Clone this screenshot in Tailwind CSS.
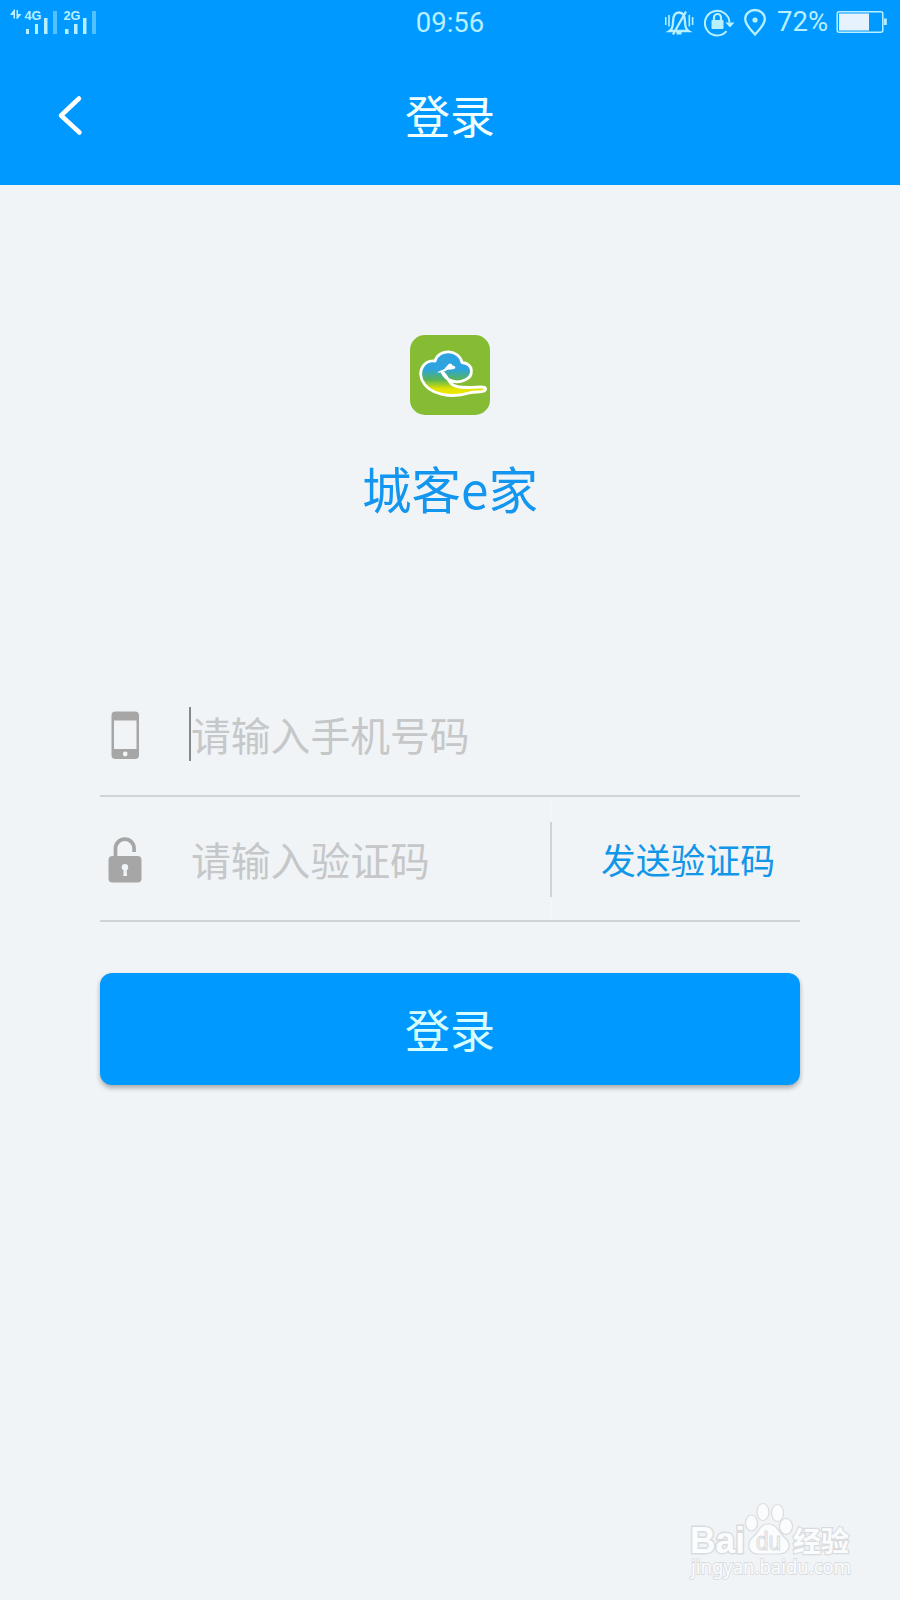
<!DOCTYPE html>
<html lang="zh-CN">
<head>
  <meta charset="UTF-8" />
  <meta name="viewport" content="width=device-width, initial-scale=1.0" />
  <title>登录</title>
  <script src="https://cdn.jsdelivr.net/npm/@tailwindcss/browser@4"></script>
</head>
<body class="bg-[#f0f4f7] h-[1600px] overflow-hidden relative font-['Roboto','Noto_Sans_CJK_SC',sans-serif]">
  <header class="h-[185px] bg-[#0099ff] flex flex-col">
    <!-- status bar -->
    <div class="h-[46px] grid grid-cols-3 items-center text-[#b9f0ff]">
      <svg class="w-[110px] h-[46px]" viewBox="0 0 110 46" fill="currentColor">
        <path d="M10 15l4-5.500h1v9h-1.500v-3.500zM21.500 14l-4 5h-1v-9h1.500v4z" />
        <text x="24.500" y="20" font-size="12.500" font-weight="700" font-family="Liberation Sans" textLength="17" lengthAdjust="spacingAndGlyphs">4G</text>
        <path d="M26 29h3v5h-3zM35 24h3v10h-3zM44 18h3.500v16h-3.500z" />
        <path d="M53 11h4v23h-4z" opacity=".45" />
        <text x="63.500" y="20" font-size="12.500" font-weight="700" font-family="Liberation Sans" textLength="17" lengthAdjust="spacingAndGlyphs">2G</text>
        <path d="M65 29h3.500v5h-3.500zM74 24h3.500v10h-3.500zM83 18h3.500v16h-3.500z" />
        <path d="M92 11h4v23h-4z" opacity=".45" />
      </svg>
      <div class="text-center text-[27.500px] leading-[46px]">09:56</div>
      <div class="flex items-center justify-end pr-[12px]">
        <!-- muted bell -->
        <svg class="w-[30px] h-[46px] shrink-0" viewBox="665 0 30 46" fill="none" stroke="currentColor" stroke-width="2.300">
          <path d="M669.500 31c2.500-1.500 3.500-4 3.500-9 0-6 2-9.500 6-9.500s6 3.500 6 9.500c0 5 1 7.500 3.500 9zM673 34.500l13-23M676.500 33.300h5" />
          <path d="M665.700 17v8M669 15v11.500M689.300 15v11.500M692.600 17v8" stroke-width="1.600" />
        </svg>
        <!-- rotation lock -->
        <svg class="w-[32px] h-[46px] ml-[9px] shrink-0" viewBox="704 0 32 46" fill="none" stroke="currentColor" stroke-width="2">
          <path d="M729.500 22.500A12.300 12.300 0 1 0 726.500 31.200" />
          <path d="M725.500 22.500h9l-4.500 5z" fill="currentColor" stroke="none" />
          <rect x="711.500" y="20" width="12" height="9" rx="1" fill="currentColor" stroke="none" />
          <path d="M714 20.500v-3a3.500 3.500 0 0 1 7 0v3" stroke-width="2.200" />
        </svg>
        <!-- location pin -->
        <svg class="w-[24px] h-[46px] ml-[8px] shrink-0" viewBox="744 0 24 46" fill="none" stroke="currentColor" stroke-width="2.300">
          <path d="M755 34.500c-3.500-4-9.800-9.500-9.800-15.500a9.800 9 0 0 1 19.600 0c0 6-6.300 11.500-9.800 15.500z" />
          <circle cx="755" cy="20" r="2.600" fill="currentColor" stroke="none" />
        </svg>
        <div class="text-[27.500px] leading-[44px] pb-[2px] w-[53px] ml-[9px]">72%</div>
        <!-- battery -->
        <svg class="w-[52px] h-[46px] ml-[6px] shrink-0" viewBox="836 1 52 46" fill="none" stroke="currentColor" stroke-width="1.500">
          <rect x="837.200" y="12.700" width="45.600" height="20.600" rx="2" />
          <path d="M839 14.500h30v17h-30z" fill="#e6f3ff" stroke="none" />
          <path d="M884 19.500h2.800v6.500h-2.800z" fill="currentColor" stroke="none" />
        </svg>
      </div>
    </div>
    <!-- title bar -->
    <div class="h-[139px] grid grid-cols-[140px_1fr_140px] items-center">
      <button class="pl-[57px] pb-[2px]">
        <svg class="w-[28px] h-[44px]" viewBox="0 0 28 44" fill="none" stroke="#ffffff" stroke-width="4.500" stroke-linecap="round" stroke-linejoin="round">
          <path d="M22 5.500L4 22.500L22.500 39.500" />
        </svg>
      </button>
      <h1 class="text-center text-[45px] leading-[60px] text-[#f0ffff] pt-[7px]">登录</h1>
    </div>
  </header>

  <main class="px-[100px] pt-[150px] flex flex-col">
    <svg class="w-[80px] h-[80px] self-center" viewBox="0 0 80 80">
      <defs>
        <linearGradient id="cloud" x1="0" y1="0" x2="0" y2="1">
          <stop offset="0.400" stop-color="#2da4e0" />
          <stop offset="0.640" stop-color="#58b455" />
          <stop offset="0.850" stop-color="#e3e300" />
          <stop offset="1" stop-color="#f1ea00" />
        </linearGradient>
      </defs>
      <rect width="80" height="80" rx="15" fill="#86bc34" />
      <path d="M32 37C36 46 46 49 55 45C64 41 64 29 52 27.500C49 14 29 13 25 26C14 25 8 35 12 45C19 61 43 63 59 58C65 56 70 58 74 56C77 54 76 52 71 52C59 52 50 54 43 50C38 47 37 40 32 37Z" fill="url(#cloud)" stroke="#ffffff" stroke-width="2.800" stroke-linejoin="round" />
      <path d="M27 37.500c3-2 5-2 8-4 1-2 2-2 3-4 2-2 4-1 4.500 1 3 0 4 3.500 1 3.500-3 1-5 0-7.500 1.500-3 2-5 2-9 2z" fill="#ffffff" />
    </svg>
    <h2 class="mt-[37px] h-[72px] text-center text-[49.500px] leading-[72px] text-[#1296f0] font-['Noto_Sans_CJK_SC',sans-serif]">城客e家</h2>

    <form class="mt-[151px]">
      <div class="h-[120px] border-b-2 border-[#d0d2d4] box-content flex items-center relative">
        <svg class="w-[50px] h-[50px] shrink-0" viewBox="0 0 50 50">
          <rect x="11.500" y="1.500" width="27.500" height="47.500" rx="4" fill="#a6a6a6" />
          <path d="M14 10.500h22.500v28.500h-22.500z" fill="#f0f4f7" />
          <circle cx="25.200" cy="44" r="2.400" fill="#f0f4f7" />
        </svg>
        <input type="text" placeholder="请输入手机号码"
          class="ml-[41px] mb-[2px] w-[500px] h-[60px] text-[39.800px] leading-[60px] placeholder:text-[#c6c7c8] font-['Noto_Sans_CJK_SC',sans-serif] focus:outline-none" />
        <!-- text caret -->
        <span class="absolute left-[89px] top-[32px] w-[2px] h-[54px] bg-[#838a8f]"></span>
      </div>
      <div class="h-[123px] border-b-2 border-[#d0d2d4] box-content flex items-center">
        <svg class="w-[50px] h-[50px] shrink-0" viewBox="0 0 50 50">
          <rect x="8.500" y="22" width="33" height="26.500" rx="4" fill="#a6a6a6" />
          <path d="M15.500 24V14.500a9.300 9.300 0 0 1 18.600 0V18" fill="none" stroke="#a6a6a6" stroke-width="3.700" />
          <circle cx="25" cy="33.300" r="3.200" fill="#f0f4f7" />
          <path d="M23.800 34h2.700l.5 8h-3.700z" fill="#f0f4f7" />
        </svg>
        <input type="text" placeholder="请输入验证码"
          class="ml-[41px] w-[359px] h-[60px] text-[39.800px] leading-[60px] placeholder:text-[#c6c7c8] font-['Noto_Sans_CJK_SC',sans-serif] focus:outline-none" />
        <div class="w-[2px] h-full bg-[#f4f5f6] flex items-center pt-[2px]">
          <div class="w-[2px] h-[75px] bg-[#d0d2d4]"></div>
        </div>
        <button type="button" class="ml-[49px] pt-[6px] text-[34.800px] leading-[50px] whitespace-nowrap text-[#1296e8]">发送验证码</button>
      </div>
      <button type="button" class="mt-[51px] w-full h-[112px] pt-[7px] rounded-[12px] bg-[#0099ff] text-[45px] text-[#d8ffff] shadow-[0_3px_5px_rgba(0,0,0,0.3)]">登录</button>
    </form>
  </main>

  <!-- watermark -->
  <svg class="absolute left-[680px] top-[1495px] w-[180px] h-[90px] overflow-visible" viewBox="0 0 180 90" fill="#fbfcfd" stroke="#d9dcdf" stroke-width="1.200">
    <g font-family="Liberation Sans" font-weight="700">
      <text x="10" y="58" font-size="36" textLength="55" lengthAdjust="spacingAndGlyphs" paint-order="stroke" stroke-width="3">Bai</text>
      <ellipse cx="71.500" cy="28" rx="6" ry="8" />
      <ellipse cx="83" cy="17" rx="6" ry="8.500" />
      <ellipse cx="97.500" cy="18" rx="6" ry="8.500" />
      <ellipse cx="106" cy="31.500" rx="6.500" ry="8" />
      <path d="M88.500 29C80 29 79 37 73 42C66 48 68 59 78 59C84 59 93 59 98 59C110 59 112 49 105 43C98 37 97 29 88.500 29Z" />
      <text x="76" y="55" font-size="25" font-weight="400" textLength="25" lengthAdjust="spacingAndGlyphs">du</text>
    </g>
    <text x="113" y="57" font-size="28" font-weight="700" font-family="Noto Sans CJK SC" textLength="56" paint-order="stroke" stroke-width="2.500">经验</text>
    <text x="11" y="79" font-size="20" font-family="Noto Sans" textLength="160" lengthAdjust="spacingAndGlyphs" paint-order="stroke" stroke-width="1.800">jingyan.baidu.com</text>
  </svg>
</body>
</html>
